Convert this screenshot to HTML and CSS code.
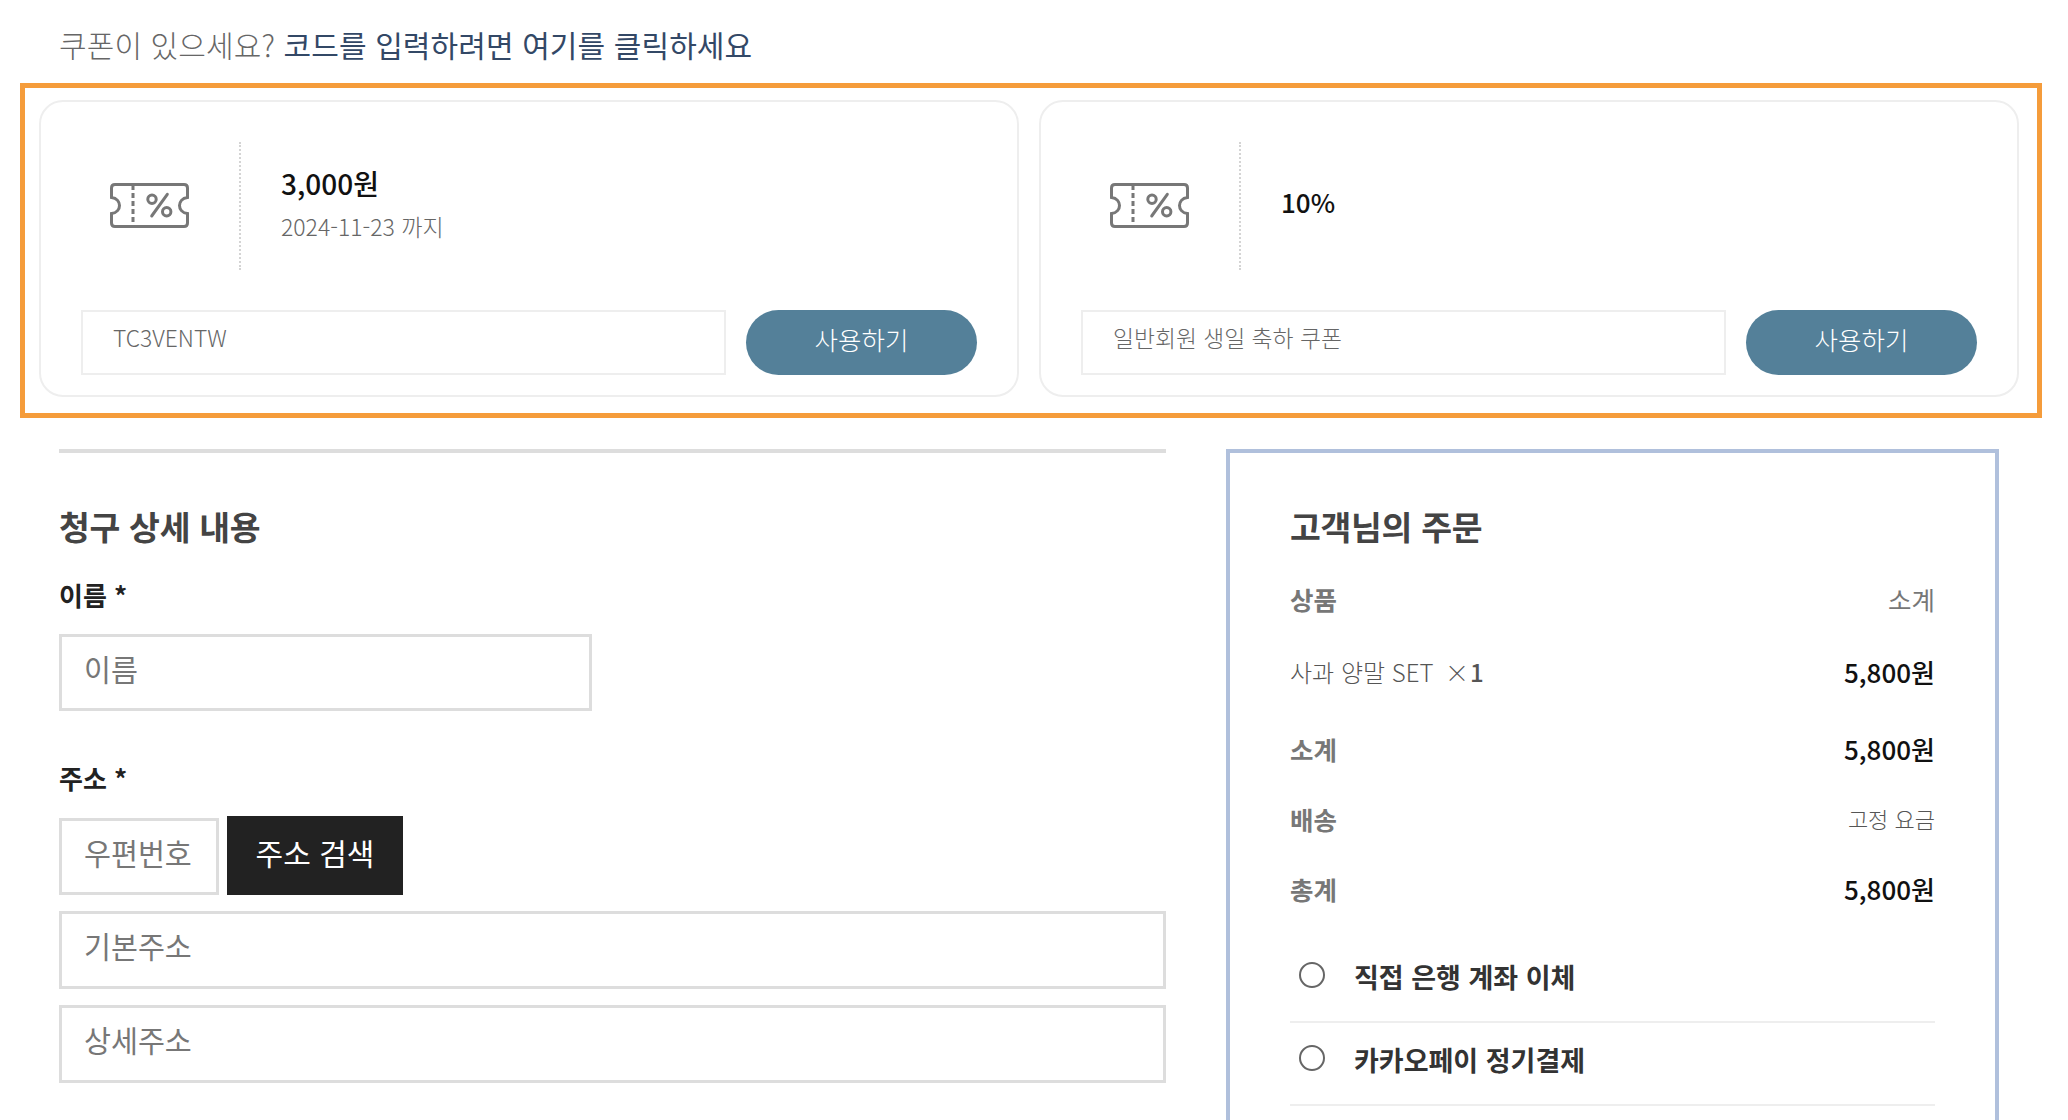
FILE: index.html
```html
<!DOCTYPE html>
<html lang="ko">
<head>
<meta charset="utf-8">
<title>결제</title>
<link rel="stylesheet" href="styles.css">
</head>
<body>
<svg class="defs" width="0" height="0" aria-hidden="true">
  <symbol id="ticket" viewBox="0 0 79 45">
    <path d="M5 1.5H74Q77.5 1.5 77.5 5V14.5C72 15 69.5 19 69.5 22.5C69.5 26 72 30 77.5 30.5V40Q77.5 43.5 74 43.5H5Q1.5 43.5 1.5 40V30.5C7 30 9.5 26 9.5 22.5C9.5 19 7 15 1.5 14.5V5Q1.5 1.5 5 1.5Z" fill="none" stroke="#777" stroke-width="3"/>
    <path d="M23 2V43" fill="none" stroke="#777" stroke-width="3" stroke-dasharray="5 3"/>
    <circle cx="42" cy="16.3" r="4.2" fill="none" stroke="#777" stroke-width="3"/>
    <circle cx="56.7" cy="28.7" r="4.2" fill="none" stroke="#777" stroke-width="3"/>
    <path d="M57.3 11.3L41.7 33" fill="none" stroke="#777" stroke-width="3" stroke-linecap="round"/>
  </symbol>
</svg>
<p class="notice">쿠폰이 있으세요? <a class="notice-link" href="#">코드를 입력하려면 여기를 클릭하세요</a></p>

<section class="coupons">
  <article class="coupon">
    <div class="coupon-top">
      <div class="coupon-icon"><svg class="ticket"><use href="#ticket"/></svg></div>
      <div class="coupon-info">
        <strong class="coupon-amount">3,000원</strong>
        <span class="coupon-date">2024-11-23 까지</span>
      </div>
    </div>
    <div class="coupon-bottom">
      <div class="coupon-code">TC3VENTW</div>
      <button class="coupon-btn" type="button">사용하기</button>
    </div>
  </article>
  <article class="coupon">
    <div class="coupon-top">
      <div class="coupon-icon"><svg class="ticket"><use href="#ticket"/></svg></div>
      <div class="coupon-info coupon-info-single">
        <strong class="coupon-amount coupon-amount-pct">10%</strong>
      </div>
    </div>
    <div class="coupon-bottom">
      <div class="coupon-code">일반회원 생일 축하 쿠폰</div>
      <button class="coupon-btn" type="button">사용하기</button>
    </div>
  </article>
</section>

<main class="checkout">
  <section class="billing">
    <h2 class="billing-title">청구 상세 내용</h2>
    <label class="field-label">이름 *</label>
    <div class="input input-name">이름</div>
    <label class="field-label field-label-address">주소 *</label>
    <div class="postal-row">
      <div class="input input-postal">우편번호</div>
      <button class="search-btn" type="button">주소 검색</button>
    </div>
    <div class="input input-wide">기본주소</div>
    <div class="input input-wide">상세주소</div>
  </section>

  <aside class="order">
    <h2 class="order-title">고객님의 주문</h2>
    <div class="order-row row-head"><span class="row-key">상품</span><span class="row-sub-head">소계</span></div>
    <div class="order-row row-item"><span class="row-product">사과 양말 SET &nbsp;<span class="row-qty">×</span><span class="row-qty-num">1</span></span><strong class="row-price">5,800원</strong></div>
    <div class="order-row row-subtotal"><span class="row-key">소계</span><strong class="row-price">5,800원</strong></div>
    <div class="order-row row-ship"><span class="row-key">배송</span><span class="row-sub">고정 요금</span></div>
    <div class="order-row row-total"><span class="row-key">총계</span><strong class="row-price">5,800원</strong></div>
    <div class="pay-list">
      <div class="pay-item"><span class="radio"></span><span class="pay-name">직접 은행 계좌 이체</span></div>
      <div class="pay-item"><span class="radio"></span><span class="pay-name">카카오페이 정기결제</span></div>
    </div>
  </aside>
</main>
</body>
</html>
```

FILE: styles.css
```css
* { box-sizing: border-box; }
html, body { margin: 0; height: 1120px; overflow: hidden; background: #fff; }
body { font-family: "Noto Sans CJK KR", "Noto Sans", sans-serif; color: #666; }
.defs { position: absolute; }

.notice { margin: 0; padding: 23px 0 0 59px; height: 83px; font-size: 30px; line-height: 42px; font-weight: 300; color: #666; letter-spacing: 0.1px; }
.notice-link { color: #334866; text-decoration: none; font-weight: 400; }

.coupons { margin-left: 20px; width: 2022px; height: 335px; border: 5px solid #f59c3b; padding: 12px 0 16px 14px; display: grid; grid-template-columns: 980px 980px; column-gap: 20px; }
.coupon { height: 297px; border: 2px solid #eee; border-radius: 24px; padding: 40px 40px 20px; }
.coupon-top { display: flex; height: 128px; }
.coupon-icon { width: 160px; flex: none; display: flex; align-items: center; padding-left: 29px; border-right: 2px dotted #d4d4d4; }
.ticket { width: 79px; height: 45px; display: block; margin-top: -1px; }
.coupon-info { padding: 0 0 5px 40px; display: flex; flex-direction: column; justify-content: center; gap: 11px; }
.coupon-info-single { padding-bottom: 8px; }
.coupon-amount { font-size: 28px; line-height: 34px; font-weight: 500; color: #111; }
.coupon-amount-pct { font-size: 26px; }
.coupon-date { font-size: 23px; line-height: 30px; font-weight: 300; color: #666; }
.coupon-bottom { display: flex; gap: 20px; margin-top: 40px; }
.coupon-code { flex: 1; height: 65px; border: 2px solid #eee; padding: 11px 30px 0; font-size: 22.8px; line-height: 30px; font-weight: 300; color: #666; }
.coupon-btn { width: 231px; height: 65px; border: 0; border-radius: 33px; background: #548099; color: #fff; font-family: inherit; font-size: 25.5px; font-weight: 300; padding: 0 0 9px; }

.checkout { display: flex; padding: 31px 0 0 59px; gap: 60px; align-items: flex-start; }
.billing { width: 1107px; border-top: 4px solid #ddd; padding-top: 50px; }
.billing-title { margin: 0; font-size: 33.5px; line-height: 46px; font-weight: 700; color: #444; letter-spacing: -0.3px; }
.field-label { display: block; margin-top: 28px; font-size: 26px; line-height: 36px; font-weight: 700; color: #222; }
.field-label-address { margin-top: 49px; }
.input { height: 77px; border: 3px solid #ddd; padding: 0 22px; font-size: 29.3px; line-height: 63px; color: #777; font-weight: 400; }
.input-name { width: 533px; margin-top: 21px; }
.input-wide { height: 78px; margin-top: 16px; }
.postal-row { display: flex; align-items: flex-end; gap: 8px; margin-top: 20px; }
.input-postal { width: 160px; white-space: nowrap; }
.search-btn { width: 176px; height: 79px; border: 0; background: #222; color: #fff; font-family: inherit; font-size: 30px; padding: 0 0 8px; }

.order { width: 773px; height: 800px; border: 4px solid #b0c0dc; padding: 50px 60px 0; }
.order-title { margin: 0; font-size: 33.5px; line-height: 46px; font-weight: 700; color: #444; letter-spacing: -0.3px; }
.order-row { display: flex; justify-content: space-between; align-items: center; height: 36px; }
.row-head { margin-top: 31px; }
.row-item { margin-top: 37px; }
.row-subtotal { margin-top: 41px; }
.row-ship { margin-top: 34px; }
.row-total { margin-top: 34px; }
.row-key { font-size: 25.5px; font-weight: 700; color: #777; }
.row-sub-head { font-size: 25.5px; font-weight: 400; color: #777; }
.row-sub { font-size: 22px; font-weight: 300; color: #555; }
.row-product { font-size: 24px; font-weight: 300; color: #555; }
.row-qty { margin: 0 1px 0 -2px; }
.row-qty-num { font-weight: 500; }
.row-price { font-size: 26px; font-weight: 500; color: #111; }
.pay-list { margin-top: 34px; }
.pay-item { height: 83px; display: flex; align-items: center; gap: 29px; padding: 0 0 8px 9px; border-bottom: 2px solid #eee; }
.radio { width: 26px; height: 26px; border: 2px solid #666; border-radius: 50%; flex: none; margin-top: -3px; }
.pay-name { font-size: 27px; font-weight: 700; color: #333; }
```
